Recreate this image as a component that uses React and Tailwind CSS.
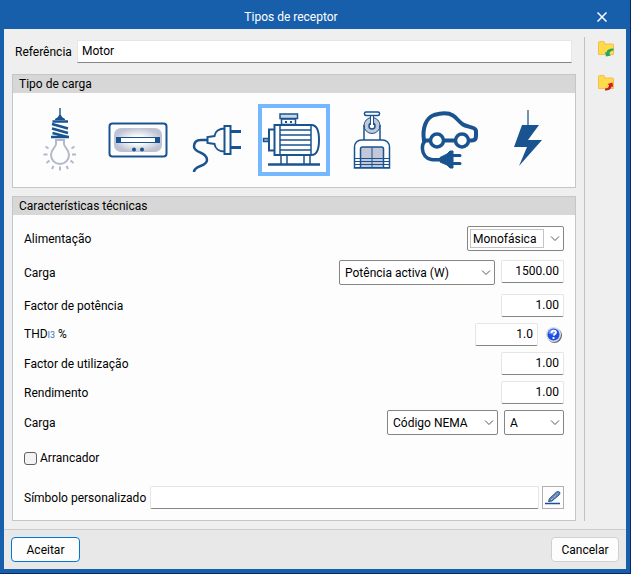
import React, { useState } from "react";

const BLUE = "#1a5490";

function BulbIcon() {
  return (
    <svg viewBox="30 98 60 84" className="h-[84px] w-[60px]" fill="none">
      <path d="M60 108v10" stroke="#5f86b0" strokeWidth="2" />
      <path d="M59 115h2l1 2 3 2v1h-10v-1l3-2z" fill={BLUE} />
      <path
        d="M52.500 121.500h15.500M52 124l16 4.500M52 128.500l16 4.500M52.500 133l15 4"
        stroke={BLUE}
        strokeWidth="2.500"
      />
      <path d="M51 137h18" stroke={BLUE} strokeWidth="2.500" />
      <path
        d="M56 140v4c0 3-5 5-5 11a9 9 0 0 0 18 0c0-6-5-8-5-11v-4z"
        stroke="#b4b8cb"
        strokeWidth="2"
      />
      <path
        d="M43.500 154.500h4M72 154.500h4M45.500 146.500l3 2M74.500 146.500l-3 2M46.500 163l3-2.500M73.500 163l-3-2.500M52 169l1.500-3M68 169l-1.500-3M60 166.500v4"
        stroke="#b4b8cb"
        strokeWidth="2"
      />
    </svg>
  );
}

function HeaterIcon() {
  return (
    <svg viewBox="106 98 64 84" className="h-[84px] w-16" fill="none">
      <defs>
        <radialGradient id="heater">
          <stop offset="0.3" stopColor="#fff" />
          <stop offset="1" stopColor="#bfc2d2" />
        </radialGradient>
      </defs>
      <rect x="109.500" y="123.500" width="57" height="33" rx="3" stroke={BLUE} strokeWidth="2" />
      <rect x="114" y="128" width="48" height="24" rx="7" fill="url(#heater)" />
      <rect x="116" y="137" width="44" height="6" fill={BLUE} />
      <rect x="121" y="138" width="34" height="4" fill="#fff" />
      <circle cx="134" cy="149.500" r="2" fill={BLUE} />
      <circle cx="142" cy="149.500" r="2" fill={BLUE} />
    </svg>
  );
}

function PlugIcon() {
  return (
    <svg viewBox="187 98 58 84" className="h-[84px] w-[58px]" fill="none" stroke={BLUE}>
      <path d="M225 128.500c-6 0-10 3-10.500 7.500l-7 1v6l7 1c.5 4.500 4.500 7.500 10.500 7.500" strokeWidth="2" />
      <rect x="224.500" y="126" width="6" height="28" strokeWidth="2" />
      <path d="M231 131.500h10M231 147.500h10" strokeWidth="3" />
      <path
        d="M207 140h-6c-5 0-7 3-7 6.500c0 7 13 5 13 13.500c0 7-13 5-13 12"
        strokeWidth="2.500"
      />
    </svg>
  );
}

function MotorIcon() {
  return (
    <svg viewBox="262 108 64 64" className="h-16 w-16" fill="none" stroke={BLUE}>
      <path d="M281.500 119h14v5.500h-14z" strokeWidth="1.500" />
      <rect x="280" y="114" width="17.500" height="4.500" fill="#cdd6e4" strokeWidth="1.500" />
      <path d="M285 122h2M290 122h2" strokeWidth="2" />
      <path
        d="M274.500 125h37c5 0 7.500 6 7.500 15s-2.500 15-7.500 15h-37z"
        strokeWidth="2"
      />
      <path d="M280 125v30M311 125v30" strokeWidth="1.500" />
      <path d="M280 130h31M280 135h31M280 140h31M280 145h31M280 150h31" strokeWidth="1.500" />
      <path d="M274 129.500h-5v21h5" strokeWidth="2" />
      <rect x="263.500" y="138.500" width="5" height="3" strokeWidth="1.500" fill="#9fb4cf" />
      <path d="M281 155v9M287 155v9M304 155v9M310 155v9" strokeWidth="1.500" />
      <path d="M268 164.500h52" strokeWidth="2.500" />
    </svg>
  );
}

function ElevatorIcon() {
  return (
    <svg viewBox="348 98 48 84" className="h-[84px] w-12" fill="none" stroke={BLUE}>
      <circle cx="372" cy="125.500" r="8" fill="#c3c7d8" strokeWidth="1" />
      <path d="M364 125v15M380 125v15" strokeWidth="1.500" />
      <circle cx="372" cy="126" r="3" fill="#fff" strokeWidth="1.500" />
      <path d="M370.500 125v-9.500h3v9.500" fill="#fff" strokeWidth="1" />
      <rect x="364.500" y="112" width="15" height="3.500" rx="1.500" fill="#fff" strokeWidth="1.500" />
      <path d="M354.500 168v-21c0-4 3-7 7-7h21c4 0 7 3 7 7v21z" strokeWidth="1.500" fill="#fff" />
      <path d="M360.500 168v-19c0-1 1-2 2-2h19c1 0 2 1 2 2v19" fill="#c3c7d8" strokeWidth="1.500" />
      <path d="M372 147v21" strokeWidth="1" />
      <path d="M354 158.500h36M354 161.500h36M354 164.500h36M354 167.500h36" strokeWidth="1" />
    </svg>
  );
}

function CarIcon() {
  return (
    <svg viewBox="419 98 62 84" className="h-[84px] w-[62px]" fill="none" stroke={BLUE}>
      <path
        d="M430 140.500h-6C422 128 426 118 434 115C441 113 449 113 453 115.500C457 118 459 122 463 124.500C467 127 476 127 476 131v5q0 4.500-4 4.500h-3M443 140.500h12"
        strokeWidth="4"
        strokeLinejoin="round"
      />
      <circle cx="437" cy="140.500" r="6.500" strokeWidth="3.500" fill="#fff" />
      <circle cx="462" cy="140.500" r="6.500" strokeWidth="3.500" fill="#fff" />
      <path d="M425 141c-4 4-3 11 0 15c3 4 8 4 17 3.500" strokeWidth="3.500" />
      <path d="M440 157.500l7-3.500 3-3h3v17h-3l-3-3-7-3z" fill={BLUE} strokeWidth="1" />
      <path d="M453 155.500h7M453 163.500h7" strokeWidth="3" strokeLinecap="round" />
    </svg>
  );
}

function BoltIcon() {
  return (
    <svg viewBox="508 98 40 84" className="h-[84px] w-10" fill="none">
      <path d="M528 110v16" stroke="#6f92b8" strokeWidth="2" />
      <path d="M522 125h17l-11 15h14l-23 26 8-19h-13z" fill={BLUE} />
    </svg>
  );
}

function FolderIcon({ out }) {
  return (
    <svg viewBox="0 0 16 16" className="h-4 w-4" fill="none">
      <path
        d="M.5 13.500v-12q0-1 1-1h4q1 0 1 1v1.500h8q1 0 1 1v9.500z"
        fill="#ffda4a"
        stroke="#f5bd4f"
      />
      {out ? (
        <path d="M7 15.500c3.500 0 6-1 6.500-4l1.500.5-.5-4.500-5 1.500 1.500 1c0 2.500-1.500 3.500-4 3.500z" fill="#cc1c2c" />
      ) : (
        <path d="M15.500 7.500c-4 0-6.500 1-7 4l-1.500-.5 1 4.500 5-1-1.500-1.500c0-2 1.500-3.500 4-3.500z" fill="#25a562" />
      )}
    </svg>
  );
}

function HelpIcon() {
  return (
    <svg viewBox="0 0 16 16" className="h-4 w-4" fill="none">
      <circle cx="8.500" cy="8.500" r="7.500" fill="#6e6e6e" />
      <circle cx="7.500" cy="7.500" r="7.500" fill="#d5dcec" />
      <circle cx="7.500" cy="7.500" r="6" fill="#1d4fe0" />
      <ellipse cx="6.500" cy="5" rx="4" ry="2.500" fill="#6d93f5" />
      <path d="M5.500 6c0-3 4.500-3 4.500-.5c0 1.500-2 1.500-2.200 3.200M7.500 10v2" stroke="#fff" strokeWidth="1.800" />
    </svg>
  );
}

function PenIcon() {
  return (
    <svg viewBox="0 0 16 14" className="h-[14px] w-4" fill="none">
      <path d="M3.500 10.500l1-3 7-6.500q2-1 3 0t-.5 3l-7 6z" fill="#6286b8" stroke="#2a5590" />
      <path d="M6 9l7-6.500" stroke="#cbd8ea" strokeDasharray="1 1" />
      <path d="M0 12.500h15" stroke="#1f4f93" strokeWidth="1.500" />
    </svg>
  );
}

const loads = [
  { id: "iluminacao", Icon: BulbIcon },
  { id: "aquecimento", Icon: HeaterIcon },
  { id: "tomada", Icon: PlugIcon },
  { id: "motor", Icon: MotorIcon },
  { id: "elevador", Icon: ElevatorIcon },
  { id: "veiculo", Icon: CarIcon },
  { id: "outros", Icon: BoltIcon },
];

function Group({ title, children }) {
  return (
    <section className="border border-[#c6c6c6] bg-[#fdfdfd]">
      <h2 className="h-[18px] bg-[#d7d7d7] px-1.5 leading-[18px]">{title}</h2>
      {children}
    </section>
  );
}

function Row({ label, htmlFor, children }) {
  return (
    <div className="flex items-center justify-between">
      <label htmlFor={htmlFor}>{label}</label>
      <div className="flex items-start gap-1.5">{children}</div>
    </div>
  );
}

function Select({ id, label, options, width, focused }) {
  return (
    <div className={`relative ${width}`}>
      <select
        id={id}
        aria-label={label}
        className="block h-[25px] w-full appearance-none rounded-[2px] border border-[#858585] bg-white pr-5 pl-[5px] outline-none"
      >
        {options.map((o) => (
          <option key={o}>{o}</option>
        ))}
      </select>
      {focused && (
        <span className="pointer-events-none absolute inset-y-[3px] right-5 left-[3px] border border-[#c4c4c4]" />
      )}
      <svg
        viewBox="0 0 10 6"
        className="pointer-events-none absolute top-[10px] right-1 h-1.5 w-2.5"
        fill="none"
        stroke="#555"
      >
        <path d="M1 .5l4 4 4-4" />
      </svg>
    </div>
  );
}

function NumberInput({ id, label, value }) {
  return (
    <input
      id={id}
      aria-label={label}
      type="text"
      defaultValue={value}
      className="h-[23px] w-[63px] rounded-[2px] border border-[#e6e6e6] border-b-[#858585] bg-white pr-1 pb-0.5 text-right outline-none"
    />
  );
}

export default function App() {
  const [selected, setSelected] = useState("motor");

  return (
    <div className="flex min-h-screen border-r border-white bg-[#0a2a66] pr-px pb-px font-['Roboto','Noto_Sans',sans-serif] text-[12px] leading-4 text-black">
      <div className="flex flex-1 flex-col bg-[#185fab] px-1 pb-1">
        {/* Barra de título */}
        <header className="flex h-[29px] items-center pt-1 text-white">
          <h1 className="flex-1 text-center">Tipos de receptor</h1>
          <button aria-label="Fechar" className="flex w-12 justify-center">
            <svg viewBox="0 0 10 10" className="h-2.5 w-2.5" stroke="#fff" strokeWidth="1.500">
              <path d="M.5 .5l9 9M9.500 .5l-9 9" />
            </svg>
          </button>
        </header>

        <div className="flex flex-1 bg-[#efefef] py-2">
          <main className="flex-1 px-2">
            <div className="mt-[3px] mb-[11px] flex items-center pr-1 pl-[3px]">
              <label htmlFor="ref" className="w-[62px]">Referência</label>
              <input
                id="ref"
                type="text"
                defaultValue="Motor"
                className="h-[23px] min-w-0 flex-1 border border-[#e6e6e6] border-b-[#858585] bg-white px-1 pb-0.5 outline-none"
              />
            </div>

            <Group title="Tipo de carga">
              <div className="grid h-[94px] grid-cols-7 items-center px-2">
                {loads.map(({ id, Icon }) => (
                  <button
                    key={id}
                    aria-label={id}
                    onClick={() => setSelected(id)}
                    className={
                      selected === id
                        ? "justify-self-center border-4 border-[#74b9ff] bg-white"
                        : "justify-self-center"
                    }
                  >
                    <Icon />
                  </button>
                ))}
              </div>
            </Group>

            <div className="h-2" />

            <Group title="Características técnicas">
              <div className="px-[11px] pt-[11px] pb-[11px]">
                <div className="flex flex-col gap-[9px]">
                  <Row label="Alimentação" htmlFor="alim">
                    <Select id="alim" options={["Monofásica", "Trifásica"]} width="w-[97px]" focused />
                  </Row>
                  <Row label="Carga" htmlFor="carga">
                    <Select id="carga" options={["Potência activa (W)"]} width="w-[156px]" />
                    <NumberInput label="Valor da carga" value="1500.00" />
                  </Row>
                  <Row label="Factor de potência" htmlFor="fp">
                    <NumberInput id="fp" value="1.00" />
                  </Row>
                </div>
                <div className="mt-1.5 flex flex-col gap-1.5">
                  <Row
                    label={
                      <>
                        THD<span className="text-[9px] text-[#2f78bd]">I3</span> %
                      </>
                    }
                    htmlFor="thd"
                  >
                    <NumberInput id="thd" value="1.0" />
                    <button aria-label="Ajuda" className="flex h-[23px] w-5 items-center justify-center">
                      <HelpIcon />
                    </button>
                  </Row>
                  <Row label="Factor de utilização" htmlFor="fu">
                    <NumberInput id="fu" value="1.00" />
                  </Row>
                  <Row label="Rendimento" htmlFor="rend">
                    <NumberInput id="rend" value="1.00" />
                  </Row>
                  <Row label="Carga" htmlFor="nema">
                    <Select id="nema" options={["Código NEMA"]} width="w-[111px]" />
                    <Select label="Letra de código" options={["A", "B", "C"]} width="w-[60px]" />
                  </Row>
                </div>

                <div className="mt-[15px] flex items-center gap-[3px]">
                  <input
                    id="arr"
                    type="checkbox"
                    className="h-[13px] w-[13px] appearance-none rounded-[3px] border border-[#5f5f5f] bg-[#f3f3f3] checked:bg-[#185fab]"
                  />
                  <label htmlFor="arr">Arrancador</label>
                </div>

                <div className="mt-5 flex items-center">
                  <label htmlFor="simb" className="w-[126px] whitespace-nowrap">
                    Símbolo personalizado
                  </label>
                  <input
                    id="simb"
                    type="text"
                    className="mr-[3px] h-[23px] min-w-0 flex-1 rounded-[2px] border border-[#e6e6e6] border-b-[#858585] bg-white px-1 outline-none"
                  />
                  <button
                    aria-label="Editar símbolo"
                    className="flex h-[23px] w-[22px] items-center justify-center border border-[#b0b0b0] bg-[#fdfdfd]"
                  >
                    <PenIcon />
                  </button>
                </div>
              </div>
            </Group>
          </main>

          {/* Importar / exportar */}
          <aside className="flex w-[42px] flex-col items-center gap-[18px] border-l border-[#c0c0c0] pt-1">
            <button aria-label="Importar">
              <FolderIcon />
            </button>
            <button aria-label="Exportar">
              <FolderIcon out />
            </button>
          </aside>
        </div>

        <footer className="flex h-10 items-center justify-between border-t border-[#cdcdcd] bg-[#e8e8e8] px-[7px]">
          <button className="h-[25px] w-[69px] rounded-[4px] border border-[#0078d4] bg-[#fdfdfd]">
            Aceitar
          </button>
          <button className="h-[25px] w-[68px] rounded-[4px] border border-[#d0d0d0] bg-[#fdfdfd]">
            Cancelar
          </button>
        </footer>
      </div>
    </div>
  );
}
